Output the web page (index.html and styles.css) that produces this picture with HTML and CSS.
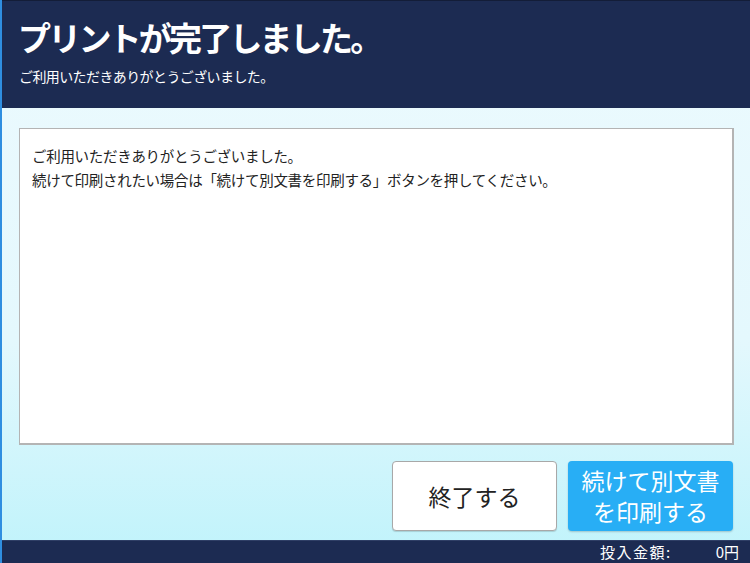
FILE: index.html
```html
<!DOCTYPE html>
<html lang="ja">
<head>
    <meta charset="UTF-8">
    <meta name="viewport" content="width=device-width, initial-scale=1.0">
    <title>プリント完了</title>
    <link rel="stylesheet" href="styles.css">
</head>
<body>
    <div class="screen">
        <div class="header">
            <h1>プリントが完了しました。</h1>
            <p>ご利用いただきありがとうございました。</p>
        </div>
        <div class="main">
            <div class="message-box">
                <p>ご利用いただきありがとうございました。</p>
                <p>続けて印刷されたい場合は「続けて別文書を印刷する」ボタンを押してください。</p>
            </div>
            <div class="actions">
                <button class="btn btn-end">終了する</button>
                <button class="btn btn-next">続けて別文書<br>を印刷する</button>
            </div>
        </div>
        <div class="footer">
            <span class="label">投入金額:</span>
            <span class="amount">0円</span>
        </div>
    </div>
</body>
</html>
```

FILE: styles.css
```css
body {
    margin: 0;
    font-family: "Noto Sans CJK JP", "Noto Sans", sans-serif;
}
.screen {
    width: 748px;
    height: 563px;
    border-left: 2px solid #2f8ee0;
    display: flex;
    flex-direction: column;
    background: linear-gradient(#ecfafe, #e4f8fd 60%, #bff3fb);
}
.header {
    height: 108px;
    box-sizing: border-box;
    background-color: #1c2b52;
    border-top: 1px solid #131d38;
    padding: 12px 0 0 16px;
    color: white;
}
.header h1 {
    margin: 0;
    font-size: 33px;
    font-weight: bold;
    line-height: 48px;
    letter-spacing: -2.8px;
}
.header p {
    margin: 5px 0 0 1px;
    font-size: 14px;
    line-height: 20px;
    letter-spacing: -0.6px;
}
.main {
    flex: 1;
    padding: 20px 16px 0 17px;
}
.message-box {
    height: 317px;
    box-sizing: border-box;
    background-color: white;
    border: 1px solid #b4b4b4;
    border-bottom-width: 2px;
    border-right-width: 2px;
    padding: 15px 12px;
    color: #222;
}
.message-box p {
    margin: 0;
    font-size: 14.5px;
    line-height: 24px;
    letter-spacing: -0.3px;
}
.actions {
    display: flex;
    justify-content: flex-end;
    gap: 11px;
    margin-top: 16px;
    padding-right: 1px;
}
.btn {
    width: 165px;
    height: 70px;
    border-radius: 4px;
    font-family: inherit;
    font-size: 23px;
    line-height: 31px;
    padding: 0;
    cursor: pointer;
}
.btn-end {
    background-color: white;
    color: #222;
    border: 1px solid #a8a8a8;
    box-shadow: 0 1px 1px rgba(0,0,0,0.15);
}
.btn-next {
    background-color: #28aef5;
    color: white;
    border: none;
    box-shadow: 0 1px 2px rgba(0,0,0,0.2);
}
.footer {
    height: 23px;
    box-sizing: border-box;
    background-color: #1c2b52;
    border-top: 1px solid #2f3f66;
    color: white;
    font-size: 15px;
    line-height: 21px;
    display: flex;
    justify-content: flex-end;
    padding-right: 11px;
}
.footer .label {
    letter-spacing: 1.5px;
    margin-right: 44px;
}
```
